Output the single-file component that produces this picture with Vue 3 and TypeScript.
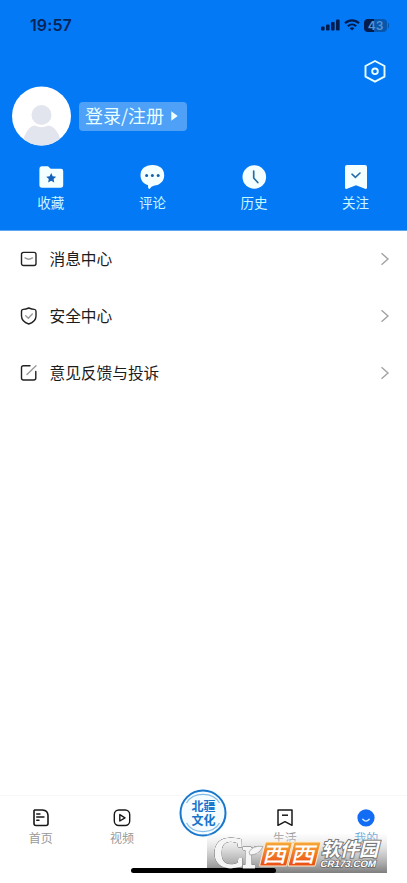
<script setup lang="ts">
interface Item { id: string; label: string }

const shortcuts: Item[] = [
  { id: 'fav', label: '收藏' },
  { id: 'comment', label: '评论' },
  { id: 'history', label: '历史' },
  { id: 'follow', label: '关注' },
]
const rows: Item[] = [
  { id: 'message', label: '消息中心' },
  { id: 'security', label: '安全中心' },
  { id: 'feedback', label: '意见反馈与投诉' },
]
</script>

<template>
  <div class="screen">
    <header class="hero">
      <div class="status">
        <span class="time">19:57</span>
        <div class="signals">
          <svg width="19" height="12" viewBox="0 0 19 12" fill="#031c4e">
            <rect x="0" y="7.5" width="3.6" height="4" rx="1" /><rect x="5" y="5.5" width="3.6" height="6" rx="1" />
            <rect x="10" y="3" width="3.6" height="8.5" rx="1" /><rect x="15" y="0.5" width="3.6" height="11" rx="1" />
          </svg>
          <svg width="16" height="12" viewBox="0 0 16 12" fill="none" stroke="#031c4e" stroke-width="2.1">
            <path d="M1 4.3C5 .4 11 .4 15 4.3M3.8 7.2C6.2 5 9.8 5 12.2 7.2" />
            <path d="M5.7 9.2Q8 7.5 10.3 9.2L8 11.5Z" fill="#031c4e" stroke="none" />
          </svg>
          <div class="battery"><span>43</span></div>
        </div>
      </div>
      <div class="settings">
        <svg width="24" height="26" viewBox="0 0 24 26" fill="none" stroke="#e9ffff" stroke-width="1.9" stroke-linejoin="round">
          <path d="M12 3 21.5 8V18.7L12 23.7 2.5 18.7V8Z" /><circle cx="12" cy="13.3" r="2.8" />
        </svg>
      </div>
      <div class="profile">
        <svg class="avatar" width="60" height="60" viewBox="0 0 60 60">
          <defs><clipPath id="face"><circle cx="29.5" cy="30" r="29.5" /></clipPath></defs>
          <circle cx="29.5" cy="30" r="29.5" fill="#fff" />
          <g clip-path="url(#face)" fill="#e2e5ee"><circle cx="29.5" cy="29" r="10" /><path d="M10 60C12 45 19 39.5 23 39.5Q29.5 43 36 39.5C43 40 48 48 50 60Z" /></g>
        </svg>
        <button class="login">
          <span>登录/注册</span>
          <svg width="7" height="10" viewBox="0 0 7 10"><path d="M.3 .2 6.7 5 .3 9.8Z" fill="#efffff" /></svg>
        </button>
      </div>
      <nav class="shortcuts">
        <div v-for="s in shortcuts" :key="s.id" class="shortcut">
          <svg width="26" height="26" viewBox="0 0 26 26" fill="#f4ffff">
            <template v-if="s.id === 'fav'">
              <path d="M3.6 2.3H10L12.7 4.8H23Q25.2 4.8 25.2 7V21Q25.2 23.7 22.8 23.7H4Q1.4 23.7 1.4 21V4.8Q1.4 2.3 3.6 2.3Z" />
              <path d="m13.2 9.1 1.5 3.2 3.5.4-2.6 2.4.7 3.5-3.1-1.8-3.1 1.8.7-3.5-2.6-2.4 3.5-.4Z" fill="#1562bd" />
            </template>
            <template v-else-if="s.id === 'comment'">
              <path d="M13.5 1C21 1 25.2 5.2 25.2 11.3S20.5 21.4 15.5 21.4Q12 22 10.5 25Q8.9 25 9 21.2C4.5 20 1.5 16.5 1.5 11.3 1.5 5.2 6 1 13.5 1Z" />
              <g fill="#1562a8"><circle cx="7.6" cy="11.5" r="1.5" /><circle cx="13.4" cy="11.5" r="1.5" /><circle cx="19.2" cy="11.5" r="1.5" /></g>
            </template>
            <template v-else-if="s.id === 'history'">
              <circle cx="13.3" cy="13" r="11.8" />
              <path d="M12.7 7V14L16.8 18.5" fill="none" stroke="#286da5" stroke-width="1.7" stroke-linecap="round" stroke-linejoin="round" />
            </template>
            <template v-else>
              <path d="M4 1H22Q24 1 24 3V23.5Q24 25.5 22 24.7L13 21.2 4 24.7Q2 25.5 2 23.5V3Q2 1 4 1Z" />
              <path d="M9 10.2 12.4 13.3 17 9" fill="none" stroke="#286da5" stroke-width="1.6" stroke-linecap="round" />
            </template>
          </svg>
          <span>{{ s.label }}</span>
        </div>
      </nav>
    </header>

    <main class="list">
      <div v-for="r in rows" :key="r.id" class="row">
        <svg class="row-icon" width="18" height="18" viewBox="0 0 18 18" fill="none" stroke="#222" stroke-width="1.4" stroke-linecap="round" stroke-linejoin="round">
          <template v-if="r.id === 'message'">
            <rect x="1.5" y="2.4" width="14.5" height="13.1" rx="2" /><path d="M5 7.9Q8.8 10.5 12.5 7.9" stroke="#999" />
          </template>
          <template v-else-if="r.id === 'security'">
            <path d="M8.8 1Q12 2.3 14.2 2.4Q16 2.5 16 4.4V9Q16 14.7 8.8 17 1.5 14.7 1.5 9V4.4Q1.5 2.5 3.4 2.4Q5.7 2.3 8.8 1Z" /><path d="M5.7 8.8 8.3 11.2 12.3 7" stroke="#999" />
          </template>
          <template v-else>
            <path d="M10 1.8H3.5Q1.5 1.8 1.5 3.8V14Q1.5 16 3.5 16H13.8Q15.8 16 15.8 14V7.5" /><path d="M7 10.5 16 1.8" stroke="#999" />
          </template>
        </svg>
        <span class="row-label">{{ r.label }}</span>
        <svg class="arrow" width="10" height="14" viewBox="0 0 10 14" fill="none" stroke="#a2a2a2" stroke-width="1.4"><path d="M1.5 1.2 8 7 1.5 12.8" /></svg>
      </div>
    </main>

    <footer class="tabs">
      <div class="tab">
        <svg width="18" height="20" viewBox="0 0 18 20" fill="none" stroke="#181818" stroke-width="1.6" stroke-linejoin="round" stroke-linecap="round"><path d="M2.5 2H10.5Q15.8 2.4 16 7.5V15.5Q16 17.5 14 17.5H4Q2 17.5 2 15.5V2.5" /><path d="M4.7 6H8M4.7 9H12M4.7 12.3H7" stroke-width="1.4" /></svg>
        <span>首页</span>
      </div>
      <div class="tab">
        <svg width="18" height="20" viewBox="0 0 18 20" fill="none" stroke="#181818" stroke-width="1.4" stroke-linejoin="round"><rect x="1.3" y="2" width="15.4" height="15.5" rx="4.5" /><path d="M6.8 6.6V13L12 9.8Z" /></svg>
        <span>视频</span>
      </div>
      <div class="tab culture">
        <svg width="50" height="50" viewBox="0 0 50 50">
          <circle cx="25" cy="25" r="24.5" fill="#f5fcff" />
          <g fill="none" stroke="#1976cb"><circle cx="25" cy="25" r="22.5" stroke-width="2" /><g stroke="#83bbe8" stroke-width="1.2"><path d="M8.5 15C15 3.5 35 3.5 41.5 15M8.5 35C15 46.5 35 46.5 41.5 35" /></g></g>
        </svg>
        <div class="culture-text"><span>北疆</span><span>文化</span></div>
      </div>
      <div class="tab">
        <svg width="18" height="20" viewBox="0 0 18 20" fill="none" stroke="#181818" stroke-width="1.5" stroke-linejoin="round"><path d="M2 2H16V17.3L9 13.7 2 17.3Z" /><path d="M6 7.2H12" /></svg>
        <span>生活</span>
      </div>
      <div class="tab active">
        <svg width="18" height="20" viewBox="0 0 18 20"><circle cx="9" cy="9.8" r="8.6" fill="#136df4" /><path d="M5.8 11.3Q9 14.8 12.2 11.3" fill="none" stroke="#dff5ff" stroke-width="1.3" stroke-linecap="round" /></svg>
        <span>我的</span>
      </div>
    </footer>

    <div class="home-bar"></div>
    <svg class="site-mark" width="180" height="39" viewBox="0 0 180 39">
      <defs>
        <linearGradient id="shade" x2="0" y2="1"><stop stop-color="#eee" stop-opacity="0.2" /><stop offset=".5" stop-color="#b4b4b4" stop-opacity=".65" /><stop offset="1" stop-color="#777" stop-opacity=".95" /></linearGradient>
        <linearGradient id="orange" x2="0" y2="1"><stop stop-color="#f7aa3a" /><stop offset="1" stop-color="#ea4c12" /></linearGradient>
      </defs>
      <rect width="180" height="39" fill="url(#shade)" />
      <path d="M0 34H66.5A2.5 2.5 0 0 1 66.5 39H0Z" fill="#000" />
      <text class="logo-letters" x="7" y="32.5" textLength="44" lengthAdjust="spacingAndGlyphs">Cr</text>
      <path d="M42 18Q46 11 56 12.5Q52 21 43 21Z" fill="#f5f5f5" stroke="#888" stroke-width=".6" />
      <g transform="skewX(-14)">
        <rect x="60.5" y="8" width="27" height="24" rx="1" fill="url(#orange)" stroke="#ffedcf" /><rect x="89" y="8" width="27" height="24" rx="1" fill="url(#orange)" stroke="#ffedcf" />
        <g class="west"><text x="62" y="28" textLength="24" lengthAdjust="spacingAndGlyphs">西</text><text x="90.5" y="28" textLength="24" lengthAdjust="spacingAndGlyphs">西</text></g>
        <text class="software" x="119.5" y="22.5" textLength="57">软件园</text>
        <text class="domain" x="121" y="33" textLength="55.5" lengthAdjust="spacingAndGlyphs">CR173.COM</text>
      </g>
    </svg>
  </div>
</template>

<style>
body { margin: 0; }
</style>

<style scoped>
.screen { position: relative; display: flex; flex-direction: column; width: 407px; height: 883px; overflow: hidden; background: #fff; font-family: "Noto Sans CJK SC", sans-serif; }
svg { display: block; flex: none; }
.hero { height: 231px; box-sizing: border-box; background: #0479f6; border-bottom: 1px solid #5ca7ee; }
.status { display: flex; justify-content: space-between; height: 50px; padding: 0 19px 0 30px; align-items: center; box-sizing: border-box; }
.time { font: 600 16px/20px Inter, sans-serif; color: #062559; letter-spacing: .1px; }
.signals { display: flex; gap: 4px; align-items: center; }
.battery { position: relative; width: 23px; height: 13px; border-radius: 4px; background: linear-gradient(90deg, #031c4e 43%, #0757ae 43%); font: 600 12px/13px Inter, sans-serif; color: #5795cf; text-align: center; margin-right: 1px; }
.battery::after { content: ""; position: absolute; right: -2px; top: 4px; width: 1px; height: 5px; border-radius: 1px; background: #0757ae; }
.settings { display: flex; justify-content: flex-end; padding: 8px 20px 0 0; height: 28px; }
.profile { display: flex; align-items: center; gap: 7px; height: 60px; padding-left: 12px; }
.login { display: flex; align-items: center; gap: 7px; width: 108px; height: 29px; padding: 0 0 0 6px; border: 0; border-radius: 4px; background: #4fa0f7; color: #e8ffff; font: 18px/27px "Noto Sans CJK SC", sans-serif; white-space: nowrap; }
.login span { padding-bottom: 2px; }
.shortcuts { display: grid; grid-template-columns: repeat(4, 101.6px); padding-top: 18px; }
.shortcut { display: flex; flex-direction: column; align-items: center; font-size: 13.5px; line-height: 20px; color: #c9f6ff; gap: 2px; }
.list { flex: 1; margin-top: -1px; }
.row { display: flex; align-items: center; height: 57px; padding: 0 17px 0 20px; font-size: 15.7px; line-height: 25px; color: #1c1c1c; }
.row-icon { margin-right: 11.5px; }
.arrow { margin-left: auto; }
.tabs { display: grid; grid-template-columns: repeat(5, 81.4px); height: 88px; box-sizing: border-box; border-top: 1px solid #f7f7f7; }
.tab { display: flex; flex-direction: column; align-items: center; padding-top: 12px; font-size: 12px; line-height: 18px; color: #999; gap: 1px; }
.culture { position: relative; padding: 0; margin-top: -8px; }
.culture-text { position: absolute; top: 11px; display: flex; flex-direction: column; font-size: 12px; line-height: 13.5px; font-weight: 700; color: #1873ca; }
.active { color: #5b9fdb; }
.site-mark { position: absolute; left: 207px; top: 834px; overflow: visible; }
.logo-letters { font: 42px "Liberation Serif", serif; fill: #f5f5f5; stroke: #f5f5f5; stroke-width: 2.4px; filter: drop-shadow(0 0 .6px #444) drop-shadow(0 0 .5px #555); }
.west { font-size: 21px; font-weight: 500; fill: #fff; }
.software { font-size: 19px; font-weight: 700; fill: #fff; stroke: #777; stroke-width: 2px; paint-order: stroke; }
.domain { font: 700 9.5px "Liberation Sans", sans-serif; fill: #fff; stroke: #666; stroke-width: 1.4px; paint-order: stroke; }
.home-bar { position: absolute; left: 131px; top: 868px; width: 145px; height: 5px; border-radius: 3px; background: #000; }
</style>
